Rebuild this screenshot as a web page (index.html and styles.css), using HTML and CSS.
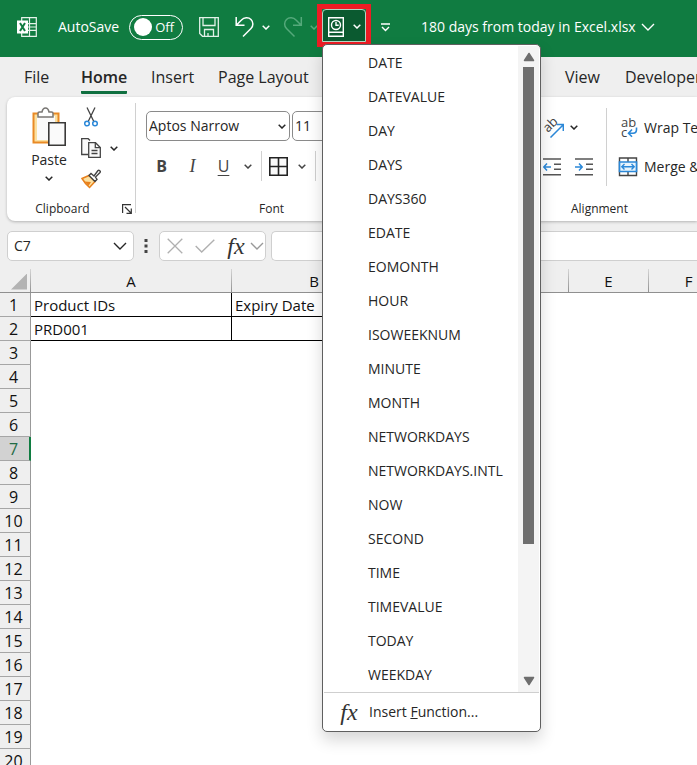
FILE: index.html
```html
<!DOCTYPE html>
<html lang="en">
<head>
<meta charset="utf-8">
<title>180 days from today in Excel.xlsx</title>
<link rel="stylesheet" href="styles.css">
</head>
<body>
<svg class="defs" aria-hidden="true">
  <symbol id="chev" viewBox="0 0 8 5"><path d="M.7.7 4 4 7.3.7" fill="none" stroke="currentColor" stroke-width="1.5"/></symbol>
  <symbol id="chev-lg" viewBox="0 0 14 8"><path d="M1 1l6 6 6-6" fill="none" stroke="currentColor" stroke-width="1.4"/></symbol>
</svg>

<header class="titlebar">
  <svg class="logo" viewBox="0 0 20 20" role="img" aria-label="Excel">
    <path d="M4.7 4V.7h14.6v18.6H4.7V16M12.5.7v18.6M10 6.7h9M10 13.3h9M10 10h9" fill="none" stroke="#e6f3eb" stroke-width="1.2"/>
    <path d="M0 3.5h11v13H0z" fill="#fff"/>
    <path d="M3 6l5 8M8 6l-5 8" stroke="#107c41" stroke-width="2"/>
  </svg>
  <label class="autosave" for="autosave">AutoSave</label>
  <span class="toggle"><input type="checkbox" id="autosave"><i class="knob"></i><span>Off</span></span>
  <button class="tb save" aria-label="Save">
    <svg width="20" height="20" viewBox="0 0 20 20" fill="none" stroke="#e2f1e8" stroke-width="1.3"><path d="M.7.7h18.6v18.6H3.5L.7 16.5zM4 1v7.5h12V1M5.5 19v-6.5h9V19M9 19v-3"/></svg>
  </button>
  <button class="tb undo" aria-label="Undo">
    <svg width="20" height="22" viewBox="0 0 20 22" fill="none" stroke="#fff" stroke-width="1.5"><path d="M1.2 1v8.2h8.3M1.5 9 6.5 4C9 1.300 13.500 1 16 3.500s2.500 6.500 0 9L8 20.500"/></svg>
    <svg class="chev"><use href="#chev"/></svg>
  </button>
  <button class="tb redo" aria-label="Redo">
    <svg width="20" height="22" viewBox="0 0 20 22" fill="none" stroke="#55a97b" stroke-width="1.5"><path d="M18.300 1v8.200H10M18 9l-5-5C10.500 1.300 6 1 3.500 3.500s-2.500 6.500 0 9l8 8"/></svg>
    <svg class="chev"><use href="#chev"/></svg>
  </button>
  <div class="datetime">
    <button class="datetime-btn" aria-label="Date and time functions">
      <svg width="16" height="20" viewBox="0 0 16 20" fill="none" stroke="#fff" stroke-width="1.4"><path d="M.7.7h14.600v18.600H.7zM.7 15.300h14.600"/><circle cx="8" cy="8" r="4.500"/><path d="M8 5v3.300h2.700"/></svg>
      <svg class="chev"><use href="#chev"/></svg>
    </button>
    <div class="menu">
      <div class="menu-body">
        <ul class="menu-list">
          <li><button>DATE</button></li>
          <li><button>DATEVALUE</button></li>
          <li><button>DAY</button></li>
          <li><button>DAYS</button></li>
          <li><button>DAYS360</button></li>
          <li><button>EDATE</button></li>
          <li><button>EOMONTH</button></li>
          <li><button>HOUR</button></li>
          <li><button>ISOWEEKNUM</button></li>
          <li><button>MINUTE</button></li>
          <li><button>MONTH</button></li>
          <li><button>NETWORKDAYS</button></li>
          <li><button>NETWORKDAYS.INTL</button></li>
          <li><button>NOW</button></li>
          <li><button>SECOND</button></li>
          <li><button>TIME</button></li>
          <li><button>TIMEVALUE</button></li>
          <li><button>TODAY</button></li>
          <li><button>WEEKDAY</button></li>
        </ul>
        <div class="scroll">
          <svg width="12" height="10" viewBox="0 0 12 10"><path d="M6 1.500 10.500 8.500h-9z" fill="#6e6e6e" stroke="#6e6e6e" stroke-width="1.500" stroke-linejoin="round"/></svg>
          <div class="track"><div class="thumb"></div></div>
          <svg width="12" height="10" viewBox="0 0 12 10"><path d="M6 8.500 10.500 1.500h-9z" fill="#6e6e6e" stroke="#6e6e6e" stroke-width="1.500" stroke-linejoin="round"/></svg>
        </div>
      </div>
      <button class="insert-fn"><span class="fx">fx</span><span>Insert <u>F</u>unction...</span></button>
    </div>
  </div>
  <button class="tb customize" aria-label="Customize toolbar">
    <svg width="9" height="9" viewBox="0 0 9 9" fill="none" stroke="#fff" stroke-width="1.400"><path d="M0 1h9M1 4l3.500 3.500L8 4"/></svg>
  </button>
  <button class="tb filename"><span>180 days from today in Excel.xlsx</span><svg class="chev-lg"><use href="#chev-lg"/></svg></button>
</header>

<nav class="tabs">
  <a href="#">File</a>
  <a href="#" class="active">Home</a>
  <a href="#">Insert</a>
  <a href="#">Page Layout</a>
  <a href="#">View</a>
  <a href="#">Developer</a>
</nav>

<section class="ribbon">
  <div class="group clipboard">
    <div class="tools">
      <button class="paste">
        <svg width="34" height="39" viewBox="0 0 34 39"><path d="M1.500 6.500h25V35.500h-25z" fill="#fbe0a0" stroke="#e98a25" stroke-width="2"/><path d="M5 9h18v24H5z" fill="#fafafa"/><path d="M6 10V6.500c0-1 .5-1.500 1.500-1.500H10c.5-2.500 1.800-4 3.500-4S16.500 2.500 17 5h2.500c1 0 1.500.5 1.500 1.500V10z" fill="#fff" stroke="#797774" stroke-width="1.500"/><path d="M16.800 15.800h16.400v22.400H16.800z" fill="#fafafa" stroke="#3b3a39" stroke-width="1.600"/></svg>
        <span>Paste</span>
        <svg class="chev"><use href="#chev"/></svg>
      </button>
      <div class="clip-tools">
        <button aria-label="Cut"><svg width="20" height="20" viewBox="0 0 20 20" fill="none"><path d="M6 .5l6.800 14M14 .5 7.200 14.500" stroke="#444" stroke-width="1.300"/><circle cx="6" cy="16.500" r="2.300" stroke="#2b88d8" stroke-width="1.500"/><circle cx="14" cy="16.500" r="2.300" stroke="#2b88d8" stroke-width="1.500"/></svg></button>
        <button aria-label="Copy"><svg width="20" height="20" viewBox="0 0 20 20" fill="#fafafa" stroke="#444" stroke-width="1.300"><path d="M7 16.500H.7V.7h6.500L9 2.500"/><path d="M7.700 4.700h6.800L19.300 9.500v9.800H7.700z"/><path d="M14.300 4.700v5h5M10.500 12.500h6M10.500 15.500h6" fill="none"/></svg><svg class="chev"><use href="#chev"/></svg></button>
        <button aria-label="Format Painter"><svg width="20" height="20" viewBox="0 0 20 20"><path d="M1 9.500 8 6.500l6 6L8.500 18.500C6 16.500 3.500 13.500 1 9.500z" fill="#fbe0a0" stroke="#e8811c" stroke-width="1.500"/><path d="M3.500 12.500 10 13 7.500 17z" fill="#e8811c"/><path d="M8 6.500l2-2 3 2.500 4-5.500c1-1 3 .8 2 2L14.500 8 16 10.500l-2 2z" fill="#fff" stroke="#444" stroke-width="1.400"/></svg></button>
      </div>
    </div>
    <div class="caption">Clipboard</div>
    <button class="launcher" aria-label="Clipboard settings"><svg width="10" height="10" viewBox="0 0 10 10" fill="none" stroke="#333" stroke-width="1.200"><path d="M.6 9V.6H9M3 3l6 6M9.300 4.500v4.800H4.500"/></svg></button>
  </div>

  <div class="group font">
    <div class="font-row">
      <div class="combo family"><select aria-label="Font"><option>Aptos Narrow</option></select><svg class="chev"><use href="#chev"/></svg></div>
      <div class="combo size"><select aria-label="Font size"><option>11</option></select></div>
    </div>
    <div class="font-row format">
      <button class="bold">B</button>
      <button class="italic">I</button>
      <button class="underline">U</button>
      <button class="more" aria-label="Underline options"><svg class="chev"><use href="#chev"/></svg></button>
      <span class="rule"></span>
      <button class="borders" aria-label="Borders"><svg width="19" height="19" viewBox="0 0 19 19" fill="#fafafa" stroke="#222" stroke-width="1.600"><path d="M.8.8h17.400v17.400H.8zM9.500 1v17M1 9.500h17"/></svg><svg class="chev"><use href="#chev"/></svg></button>
      <span class="rule"></span>
    </div>
    <div class="caption">Font</div>
  </div>

  <div class="group alignment">
    <div class="align-tools">
      <div class="align-left">
        <button class="orientation" aria-label="Orientation"><svg width="21" height="21" viewBox="0 0 21 21"><text class="glyph" x="5" y="16" transform="rotate(-45 5 16)">ab</text><path d="M7.500 20.500 20 8M14 7.500h6.300V14" fill="none" stroke="#2b88d8" stroke-width="1.500"/></svg><svg class="chev"><use href="#chev"/></svg></button>
        <button aria-label="Decrease Indent"><svg width="19" height="18" viewBox="0 0 19 18" fill="none"><path d="M0 1h18M11 6.300h7M11 11.300h7M0 16.700h18" stroke="#555" stroke-width="1.500"/><path d="M8 9H1M4 5.500.8 9 4 12.500" stroke="#2b88d8" stroke-width="1.500"/></svg></button>
        <button aria-label="Increase Indent"><svg width="19" height="18" viewBox="0 0 19 18" fill="none"><path d="M0 1h18M11 6.300h7M11 11.300h7M0 16.700h18" stroke="#555" stroke-width="1.500"/><path d="M0 9h7M4 5.500 7.200 9 4 12.500" stroke="#2b88d8" stroke-width="1.500"/></svg></button>
      </div>
      <div class="align-right">
        <button><svg width="20" height="20" viewBox="0 0 20 20"><text class="glyph" x="3" y="9">ab</text><text class="glyph" x="3" y="19">c</text><path d="M18.500 9.500v2c0 2.500-1 3.700-3.500 3.700h-4M14 11.500l-3.500 3.700 3.500 3.500" fill="none" stroke="#2b88d8" stroke-width="1.600"/></svg>Wrap Text</button>
        <button><svg width="20" height="20" viewBox="0 0 20 20" fill="none"><path d="M1.500 1h17v17.500h-17zM10 1v4M10 15v4" stroke="#444" stroke-width="1.400"/><path d="M1.500 5h17v9.500h-17z" fill="#e8f4fc" stroke="#2b88d8" stroke-width="1.700"/><path d="M4 9.700h12M6.500 7 3.800 9.700l2.700 2.700M13.500 7l2.700 2.700-2.700 2.700" stroke="#2b88d8" stroke-width="1.400"/></svg>Merge &amp; Center</button>
      </div>
    </div>
    <div class="caption">Alignment</div>
  </div>
</section>

<section class="formula">
  <div class="namebox"><input aria-label="Name box" value="C7"><svg class="chev-lg"><use href="#chev-lg"/></svg></div>
  <svg class="dots" width="4" height="14" viewBox="0 0 4 14" fill="#444"><path d="M.5 0h3v3h-3zM.5 5.500h3v3h-3zM.5 11h3v3h-3z"/></svg>
  <div class="fn-buttons">
    <button aria-label="Cancel"><svg width="16" height="16" viewBox="0 0 16 16" stroke="#b0b0b0" stroke-width="1.300"><path d="M.7.7l14.600 14.600M15.300.7.7 15.300"/></svg></button>
    <button aria-label="Enter"><svg width="20" height="14" viewBox="0 0 20 14" fill="none" stroke="#b0b0b0" stroke-width="1.400"><path d="M.7 7l6 6L19.300.7"/></svg></button>
    <button class="insert" aria-label="Insert function"><span class="fx">fx</span><svg class="chev-lg"><use href="#chev-lg"/></svg></button>
  </div>
  <input class="formula-input" aria-label="Formula">
</section>

<main class="sheet">
  <table>
    <colgroup><col class="c-row"><col class="c-a"><col class="c-b"><col class="c-c"><col class="c-c"><col class="c-e"><col class="c-e"></colgroup>
    <thead><tr><th><i class="corner"></i></th><th>A</th><th>B</th><th></th><th></th><th>E</th><th>F</th></tr></thead>
    <tbody>
      <tr class="data"><th>1</th><td>Product IDs</td><td>Expiry Date</td></tr>
      <tr class="data"><th>2</th><td>PRD001</td><td></td></tr>
      <tr><th>3</th></tr>
      <tr><th>4</th></tr>
      <tr><th>5</th></tr>
      <tr><th>6</th></tr>
      <tr class="current"><th>7</th></tr>
      <tr><th>8</th></tr>
      <tr><th>9</th></tr>
      <tr><th>10</th></tr>
      <tr><th>11</th></tr>
      <tr><th>12</th></tr>
      <tr><th>13</th></tr>
      <tr><th>14</th></tr>
      <tr><th>15</th></tr>
      <tr><th>16</th></tr>
      <tr><th>17</th></tr>
      <tr><th>18</th></tr>
      <tr><th>19</th></tr>
      <tr><th>20</th></tr>
    </tbody>
  </table>
</main>
</body>
</html>
```

FILE: styles.css
```css
* { box-sizing: border-box; }

body {
  margin: 0;
  height: 100vh;
  overflow: hidden;
  display: flex;
  flex-direction: column;
  background: #efefef;
  color: #262626;
  font: 14px/20px "Open Sans", "Noto Sans", sans-serif;
}

button, select, input { font: inherit; color: inherit; }
button { padding: 0; border: 0; background: none; display: flex; align-items: center; }
svg { display: block; flex: none; }
a { color: inherit; text-decoration: none; }
.defs { position: absolute; width: 0; height: 0; }
.chev { width: 8px; height: 5px; }
.chev-lg { width: 14px; height: 8px; }

/* Title bar */
.titlebar {
  flex: none;
  height: 57px;
  padding: 0 0 3px 17px;
  display: flex;
  align-items: center;
  background: #107c41;
  color: #fff;
  white-space: nowrap;
}
.logo { width: 20px; height: 20px; margin-right: 21px; }
.autosave { width: 71px; }
.toggle {
  position: relative;
  width: 54px;
  height: 25px;
  padding: 0 8px 0 4px;
  display: flex;
  align-items: center;
  justify-content: space-between;
  border: 1px solid #fff;
  border-radius: 13px;
  font-size: 13px;
}
.toggle input { position: absolute; inset: 0; margin: 0; opacity: 0; width: 100%; height: 100%; }
.knob { width: 18px; height: 18px; border-radius: 50%; background: #fff; }
.tb { flex: none; gap: 7px; }
.save { margin-left: 16px; width: 36px; }
.undo { width: 48px; }
.redo { width: 39px; color: #55a97b; }
.datetime {
  position: relative;
  z-index: 2;
  flex: none;
  align-self: flex-start;
  width: 54px;
  height: 43px;
  margin: 4px 0 0 -5px;
  border: 5px solid #ed1c24;
}
.datetime-btn {
  width: 100%;
  height: 100%;
  padding: 2px 4px 0 5px;
  justify-content: space-between;
  background: #0b5a30;
  border: 1px solid #b5d6c4;
  border-radius: 4px 4px 0 0;
}
.customize { margin-left: 10px; width: 40px; }
.filename { gap: 5px; }

/* Function menu */
.menu {
  position: absolute;
  z-index: -1;
  top: 35px;
  left: 0;
  width: 219px;
  background: #fff;
  color: #262626;
  border: 1px solid #5f5f5f;
  border-radius: 5px;
  box-shadow: 0 8px 16px rgba(0, 0, 0, .16);
}
.menu-body { display: flex; padding-top: 1px; margin: 0 1px; border-bottom: 1px solid #cfcfcf; }
.menu-list { flex: 1; margin: 0; padding: 0; list-style: none; }
.menu-list button { width: 100%; height: 34px; padding-left: 44px; }
.scroll {
  width: 21px;
  padding: 6px 0;
  display: flex;
  flex-direction: column;
  align-items: center;
  gap: 5px;
  background: #f4f4f4;
}
.track { flex: 1; width: 11px; }
.thumb { height: 79%; background: #6f6f6f; }
.insert-fn { width: 100%; height: 38px; padding-left: 17px; gap: 11px; }
.fx { width: 18px; font: italic 24px/24px "Liberation Serif", serif; color: #333; }

/* Tabs */
.tabs {
  flex: none;
  height: 40px;
  padding: 0 0 3px 24px;
  display: grid;
  grid-template-columns: 57px 70px 67px 347px 60px auto;
  justify-items: start;
  align-items: end;
  font-size: 16px;
  white-space: nowrap;
}
.tabs a { height: 34px; line-height: 35px; border-bottom: 3px solid transparent; }
.tabs .active { font-weight: 600; border-color: #107040; border-radius: 1px; }

/* Ribbon */
.ribbon {
  flex: none;
  height: 124px;
  margin-left: 7px;
  display: flex;
  overflow: hidden;
  background: #fff;
  border-radius: 8px 0 0 8px;
  box-shadow: 0 1px 3px rgba(0, 0, 0, .25);
  white-space: nowrap;
}
.group { position: relative; flex: none; display: flex; flex-direction: column; padding-bottom: 2px; }
.caption { margin-top: auto; text-align: center; font-size: 12px; }
.clipboard { width: 129px; padding-top: 10px; }
.clipboard::after { content: ""; position: absolute; right: 0; top: 6px; bottom: 8px; width: 1px; background: #d0d0d0; }
.clipboard .caption { padding-right: 18px; }
.launcher { position: absolute; right: 4px; bottom: 7px; }
.tools { display: flex; gap: 13px; padding-left: 23px; }
.paste { flex-direction: column; width: 38px; gap: 4px; }
.paste .chev { margin-top: 2px; }
.clip-tools { display: flex; flex-direction: column; gap: 11px; }
.clip-tools button { gap: 9px; }

.font { width: 271px; padding-top: 14px; gap: 10px; }
.font-row { display: flex; align-items: center; gap: 2px; padding-left: 10px; height: 30px; }
.combo { position: relative; height: 30px; border: 1px solid #8a8a8a; border-radius: 5px; background: #fff; }
.combo select { width: 100%; height: 100%; padding: 0 2px; border: 0; background: none; appearance: none; }
.combo .chev { position: absolute; right: 3px; top: 12px; pointer-events: none; }
.family { width: 144px; }
.size { width: 60px; }
.format { gap: 0; color: #444; font-size: 16px; }
.format button { justify-content: center; width: 31px; }
.format .bold { font-weight: 700; }
.format .italic { font-family: "Liberation Serif", serif; font-style: italic; font-size: 18px; }
.format .underline { text-decoration: underline; text-underline-offset: 3px; }
.format .more { width: 17px; }
.format .borders { width: 50px; gap: 10px; }
.rule { width: 1px; height: 30px; margin-left: 5px; background: #d0d0d0; }
.rule:last-child { margin-left: 3px; }

.alignment { width: 385px; padding-top: 11px; }
.align-tools { display: flex; padding-left: 136px; }
.align-left {
  width: 64px;
  height: 78px;
  display: grid;
  grid-template-columns: 32px 1fr;
  align-items: center;
  border-right: 1px solid #d0d0d0;
}
.align-left button { height: 32px; }
.align-left .orientation { grid-column: span 2; gap: 6px; }
.align-right { display: grid; grid-template-rows: 39px 39px; align-items: center; padding-left: 11px; }
.align-right button { gap: 6px; }
.glyph { font-size: 13px; fill: #444; }

/* Formula bar */
.formula { flex: none; display: flex; align-items: center; height: 30px; margin: 10px 0 8px 7px; }
.namebox, .fn-buttons, .formula-input {
  height: 30px;
  border: 1px solid #cfcfcf;
  border-radius: 5px;
  background: #fff;
}
.namebox { display: flex; align-items: center; width: 127px; padding: 0 6px; }
.namebox input { flex: 1; min-width: 0; padding: 0; border: 0; background: none; }
.dots { margin: 0 11px 0 10px; }
.fn-buttons { display: flex; align-items: center; gap: 12px; width: 107px; padding-left: 7px; color: #999; }
.insert { gap: 5px; }
.formula-input { flex: 1; min-width: 0; margin-left: 5px; border-right: 0; border-radius: 5px 0 0 5px; }

/* Sheet */
.sheet { flex: 1; min-height: 0; overflow: hidden; background: linear-gradient(#efefef 24px, #fff 24px); }
table { width: 728px; table-layout: fixed; border-collapse: separate; border-spacing: 0; color: #111; font-size: 15px; }
.c-row { width: 31px; }
.c-a { width: 201px; }
.c-b { width: 165px; }
.c-c { width: 86px; }
.c-e { width: 80px; }
th, td { height: 24px; padding: 0; line-height: 22px; white-space: nowrap; }
th { font-weight: 400; background: #efefef; border-bottom: 1px solid #a6a6a6; border-right: 1px solid #999; }
thead th { border-right: 1px solid; border-image: linear-gradient(#d8d8d8, #8e8e8e) 1; border-top: 0; border-left: 0; }
tbody th { padding-right: 3px; font-size: 16px; }
td { padding-left: 3px; border: 0 solid #000; border-width: 0 1px 1px 0; }
.corner { display: block; width: 16px; height: 16px; margin: 2px 0 0 11px; background: #b3b3b3; clip-path: polygon(100% 0, 100% 100%, 0 100%); }
.current th { background: #d2d2d2; color: #1f6b45; padding-right: 2px; border-right: 2px solid #107c41; }
```
